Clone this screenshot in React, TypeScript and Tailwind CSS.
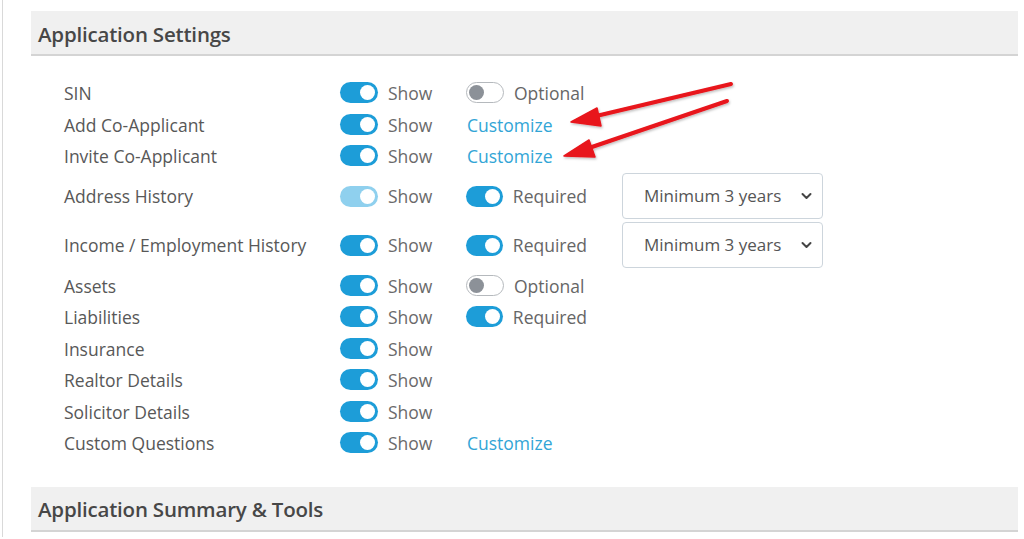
import React from "react";

type Extra =
  | { kind: "toggle"; on: boolean; label: string; select?: boolean }
  | { kind: "link" }
  | { kind: "none" };

type Row = { label: string; showFaded?: boolean; extra: Extra };

const rows: Row[] = [
  { label: "SIN", extra: { kind: "toggle", on: false, label: "Optional" } },
  { label: "Add Co-Applicant", extra: { kind: "link" } },
  { label: "Invite Co-Applicant", extra: { kind: "link" } },
  { label: "Address History", showFaded: true, extra: { kind: "toggle", on: true, label: "Required", select: true } },
  { label: "Income / Employment History", extra: { kind: "toggle", on: true, label: "Required", select: true } },
  { label: "Assets", extra: { kind: "toggle", on: false, label: "Optional" } },
  { label: "Liabilities", extra: { kind: "toggle", on: true, label: "Required" } },
  { label: "Insurance", extra: { kind: "none" } },
  { label: "Realtor Details", extra: { kind: "none" } },
  { label: "Solicitor Details", extra: { kind: "none" } },
  { label: "Custom Questions", extra: { kind: "link" } },
];

function Toggle({ on, faded }: { on: boolean; faded?: boolean }) {
  if (!on) {
    return (
      <div className="w-[38px] h-[21px] rounded-full border-[1.5px] border-[#b5b9bd] bg-white flex items-center px-[2px]">
        <div className="w-[15px] h-[15px] rounded-full bg-[#8c9198]" />
      </div>
    );
  }
  return (
    <div
      className={
        "w-[38px] h-[21px] rounded-full flex items-center justify-end px-[3px] " +
        (faded ? "bg-[#8fd0ee]" : "bg-[#1d9dd8]")
      }
    >
      <div className="w-[15px] h-[15px] rounded-full bg-white" />
    </div>
  );
}

function MinSelect() {
  return (
    <div className="ml-[35px] w-[201px] h-[46px] rounded-[4px] border border-[#cdd5dc] bg-white flex items-center justify-between pl-[21px] pr-[10px] text-[#555] text-[17px]">
      <span>Minimum 3 years</span>
      <svg width="11" height="8" viewBox="0 0 11 8" fill="none">
        <path d="M1.5 2 L5.5 6 L9.5 2" stroke="#444" strokeWidth="2" strokeLinecap="round" strokeLinejoin="round" />
      </svg>
    </div>
  );
}

function SettingRow({ row }: { row: Row }) {
  const tall = row.extra.kind === "toggle" && row.extra.select;
  return (
    <div className={"flex items-center " + (tall ? "h-[49px]" : "h-[31.5px]")}>
      <div className="w-[276px] text-[#585858] pt-[1px]">{row.label}</div>
      <div className="w-[126px] flex items-center gap-[10px]">
        <Toggle on faded={row.showFaded} />
        <span className="text-[#6a6a6a] pt-[1px]">Show</span>
      </div>
      {row.extra.kind === "toggle" && (
        <div className="flex items-center">
          <div className="flex items-center gap-[10px] w-[121px]">
            <Toggle on={row.extra.on} />
            <span className="text-[#666] pt-[1px]">{row.extra.label}</span>
          </div>
          {row.extra.select && <MinSelect />}
        </div>
      )}
      {row.extra.kind === "link" && (
        <span className="ml-[1px] pt-[1px] text-[#32a5d6]">Customize</span>
      )}
    </div>
  );
}

function SectionHeader({ title }: { title: string }) {
  return (
    <div className="h-[45px] bg-[#f0f0f0] border-b-2 border-[#d4d4d4] flex items-center pl-[7px] pt-[3px]">
      <span className="text-[20.5px] font-semibold text-[#474747] tracking-[-0.2px]">{title}</span>
    </div>
  );
}

export default function App() {
  return (
    <div
      className="relative w-[1024px] h-[539px] bg-white overflow-hidden text-[17.5px]"
      style={{ fontFamily: '"Open Sans", "Noto Sans", sans-serif' }}
    >
      <div className="flex h-full">
        {/* page edge */}
        <div className="w-[3px] h-[537px] border-r border-[#d9d9d9]" />
        <div className="flex-1 pl-[28px] pr-[6px] pt-[11px]">
          <SectionHeader title="Application Settings" />
          <div className="pl-[33px] pt-[21px]">
            {rows.map((r) => (
              <SettingRow key={r.label} row={r} />
            ))}
          </div>
          <div className="mt-[28px]">
            <SectionHeader title="Application Summary & Tools" />
          </div>
        </div>
      </div>

      {/* annotation arrows */}
      <svg className="absolute left-0 top-0 pointer-events-none" width="1024" height="539">
        <defs>
          <filter id="arrowShadow" x="-10%" y="-30%" width="120%" height="160%">
            <feDropShadow dx="1" dy="1.5" stdDeviation="1.2" floodColor="#000" floodOpacity="0.25" />
          </filter>
        </defs>
        <g filter="url(#arrowShadow)" fill="#e8141b" stroke="#e8141b" strokeLinecap="round" strokeLinejoin="round">
          <line x1="731" y1="84" x2="592" y2="117" strokeWidth="4" />
          <polygon points="571,122 597,108 601,126" strokeWidth="1.5" />
          <line x1="727" y1="101" x2="586" y2="149" strokeWidth="4" />
          <polygon points="564,156 589,140 595,157" strokeWidth="1.5" />
        </g>
      </svg>
    </div>
  );
}
